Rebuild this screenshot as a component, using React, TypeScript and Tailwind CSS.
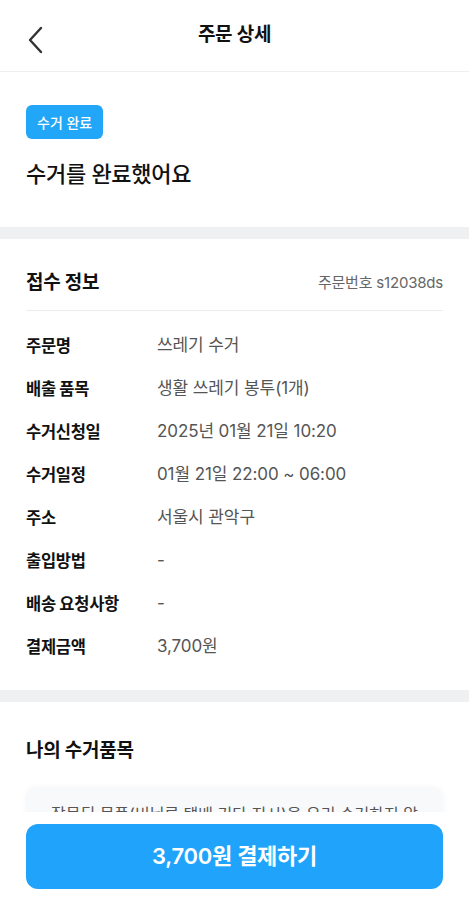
import React from 'react';

const rows: [string, string][] = [
  ['주문명', '쓰레기 수거'],
  ['배출 품목', '생활 쓰레기 봉투(1개)'],
  ['수거신청일', '2025년 01월 21일 10:20'],
  ['수거일정', '01월 21일 22:00 ~ 06:00'],
  ['주소', '서울시 관악구'],
  ['출입방법', '-'],
  ['배송 요청사항', '-'],
  ['결제금액', '3,700원'],
];

export default function App() {
  return (
    <div
      className="relative h-[900px] w-full overflow-hidden bg-white text-[#111]"
      style={{ fontFamily: 'Inter, "Noto Sans CJK KR", "Noto Sans", sans-serif' }}
    >
      {/* 헤더 */}
      <header className="relative flex h-[72px] items-center justify-center border-b border-[#efefef]">
        <button className="absolute left-[22px] top-[22px] p-1">
          <svg width="20" height="28" viewBox="0 0 20 28" fill="none">
            <path d="M15 2 L4 14 L15 26" stroke="#333" strokeWidth="2.4" strokeLinecap="round" strokeLinejoin="round" />
          </svg>
        </button>
        <h1 className="text-[19px] font-semibold tracking-[-0.3px]">주문 상세</h1>
      </header>

      {/* 상태 */}
      <section className="px-[26px] pb-[36px] pt-[33px]">
        <span className="inline-flex h-[34px] items-center rounded-[6px] bg-[#22a6f8] px-[11px] text-[14px] font-medium text-white">
          수거 완료
        </span>
        <p className="mt-[18px] text-[22px] font-medium leading-[34px] tracking-[-0.3px]">수거를 완료했어요</p>
      </section>

      <div className="h-[12px] bg-[#eef0f2]" />

      {/* 접수 정보 */}
      <section className="px-[26px] pb-[21px] pt-[30px]">
        <div className="flex items-center justify-between border-b border-[#ececec] pb-[12px]">
          <h2 className="text-[19px] font-semibold tracking-[-0.3px]">접수 정보</h2>
          <span className="text-[15px] text-[#666] tracking-[-0.2px]">주문번호 s12038ds</span>
        </div>
        <div className="mt-[14px] flex flex-col">
          {rows.map(([label, value]) => (
            <div key={label} className="grid h-[43px] grid-cols-[131px_1fr] items-center">
              <span className="text-[16.5px] font-bold tracking-[-0.3px]">{label}</span>
              <span className="text-[17px] text-[#555] tracking-[-0.1px]">{value}</span>
            </div>
          ))}
        </div>
      </section>

      <div className="h-[12px] bg-[#eef0f2]" />

      {/* 나의 수거품목 */}
      <section className="px-[26px] pt-[35px]">
        <h2 className="text-[19px] font-semibold tracking-[-0.3px]">나의 수거품목</h2>
        <div className="mt-[22px] rounded-[10px] bg-[#f8f9fa] px-[22px] pb-[20px] pt-[14px] shadow-[0_0_6px_rgba(0,0,0,0.04)]">
          <p className="text-center text-[16px] leading-[26px] text-[#555]">
            잘못된 물품(비닐류 택배 기타 지시)을 우리 수거하지 않아요. 배출 전 품목을 확인해 주세요.
          </p>
        </div>
      </section>

      {/* 결제 버튼 */}
      <div className="fixed bottom-0 left-0 right-0 bg-white px-[26px] pb-[11px] pt-[12px]">
        <button className="flex h-[65px] w-full items-center justify-center rounded-[12px] bg-[#20a4fb] text-[22px] font-semibold tracking-[-0.3px] text-white">
          3,700원 결제하기
        </button>
      </div>
    </div>
  );
}
